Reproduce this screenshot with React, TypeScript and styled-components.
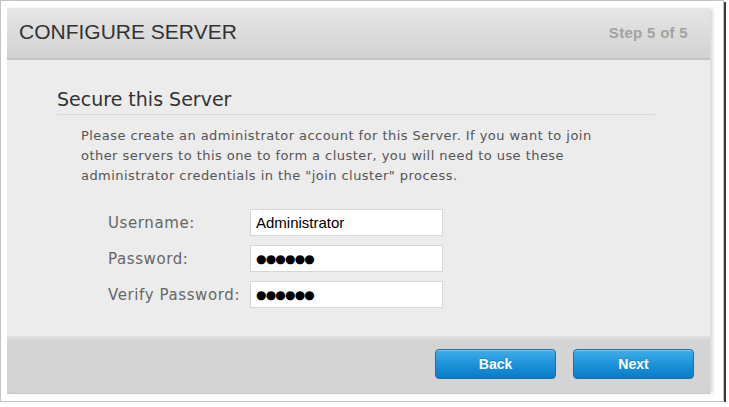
import React from "react";
import styled, { createGlobalStyle } from "styled-components";

const GlobalStyle = createGlobalStyle`
  html, body {
    margin: 0;
    padding: 0;
    background: #ffffff;
  }
`;

const Frame = styled.div`
  box-sizing: border-box;
  width: 724px;
  height: 402px;
  border: 1px solid #c4c4c4;
  padding: 7px 0 0 6px;
  background: #ffffff;
  box-shadow: 2px 2px 0 #3a3a3a;
`;

const Panel = styled.div`
  width: 703px;
  height: 386px;
  display: flex;
  flex-direction: column;
  box-shadow: 4px 0 3px -1px rgba(0, 0, 0, 0.14);
`;

const Header = styled.div`
  box-sizing: border-box;
  height: 52px;
  display: flex;
  align-items: center;
  justify-content: space-between;
  padding: 0 22px 2px 12px;
  background: linear-gradient(#e6e6e6, #d2d2d2);
  border-bottom: 2px solid #c4c4c4;
`;

const Title = styled.h1`
  margin: 0;
  font-family: "Liberation Sans", Arial, sans-serif;
  font-weight: normal;
  font-size: 21px;
  color: #333333;
`;

const Step = styled.span`
  font-family: "Liberation Sans", Arial, sans-serif;
  font-weight: bold;
  font-size: 15px;
  letter-spacing: 0.3px;
  color: #a2a2a2;
`;

const Body = styled.div`
  flex: 1;
  background: #ececec;
  padding: 28px 55px 0 50px;
`;

const Heading = styled.h2`
  margin: 0;
  padding-bottom: 4px;
  font-family: "DejaVu Sans", Verdana, sans-serif;
  font-weight: normal;
  font-size: 19px;
  color: #333333;
  border-bottom: 1px solid #d9d9d9;
`;

const Intro = styled.p`
  margin: 11px 0 0 24px;
  font-family: "DejaVu Sans", Verdana, sans-serif;
  font-size: 13px;
  letter-spacing: 0.45px;
  line-height: 20px;
  color: #555555;
`;

const Form = styled.div`
  margin: 23px 0 0 51px;
  display: flex;
  flex-direction: column;
  gap: 9px;
`;

const Row = styled.label`
  display: flex;
  align-items: center;
`;

const Label = styled.span`
  width: 142px;
  font-family: "DejaVu Sans", Verdana, sans-serif;
  font-size: 15px;
  letter-spacing: 0.6px;
  color: #666666;
`;

const Field = styled.input<{ $masked?: boolean }>`
  box-sizing: border-box;
  width: 193px;
  height: 27px;
  margin: 0;
  padding: 0 5px;
  border: 1px solid #d6d6d6;
  background: #ffffff;
  outline: none;
  color: #000000;
  font-family: ${(p) => (p.$masked ? '"DejaVu Sans", sans-serif' : '"Liberation Sans", Arial, sans-serif')};
  font-size: ${(p) => (p.$masked ? "12px" : "15px")};
  letter-spacing: ${(p) => (p.$masked ? "-0.8px" : "0")};
`;

const Footer = styled.div`
  height: 58px;
  display: flex;
  justify-content: flex-end;
  align-items: flex-start;
  gap: 17px;
  padding: 13px 16px 0 0;
  box-sizing: border-box;
  background: linear-gradient(#e4e4e4, #d4d4d4 4px, #d4d4d4 calc(100% - 2px), #c8c8c8);
`;

const Button = styled.button`
  width: 121px;
  height: 30px;
  border: 1px solid #1a6eaa;
  border-radius: 4px;
  background: linear-gradient(#40aee8, #1d93da 50%, #0a7cc6);
  box-shadow: inset 0 1px 0 rgba(255, 255, 255, 0.35);
  color: #ffffff;
  font-family: "Liberation Sans", Arial, sans-serif;
  font-weight: bold;
  font-size: 14px;
  text-shadow: 0 -1px 0 rgba(0, 0, 0, 0.15);
  cursor: pointer;
`;

export default function App() {
  return (
    <>
      <GlobalStyle />
      <Frame>
        <Panel>
          <Header>
            <Title>CONFIGURE SERVER</Title>
            <Step>Step 5 of 5</Step>
          </Header>
          <Body>
            <Heading>Secure this Server</Heading>
            <Intro>
              Please create an administrator account for this Server. If you want to join
              <br />
              other servers to this one to form a cluster, you will need to use these
              <br />
              administrator credentials in the "join cluster" process.
            </Intro>
            <Form>
              <Row>
                <Label>Username:</Label>
                <Field defaultValue="Administrator" />
              </Row>
              <Row>
                <Label>Password:</Label>
                <Field $masked readOnly value="●●●●●●" />
              </Row>
              <Row>
                <Label>Verify Password:</Label>
                <Field $masked readOnly value="●●●●●●" />
              </Row>
            </Form>
          </Body>
          <Footer>
            <Button>Back</Button>
            <Button>Next</Button>
          </Footer>
        </Panel>
      </Frame>
    </>
  );
}
